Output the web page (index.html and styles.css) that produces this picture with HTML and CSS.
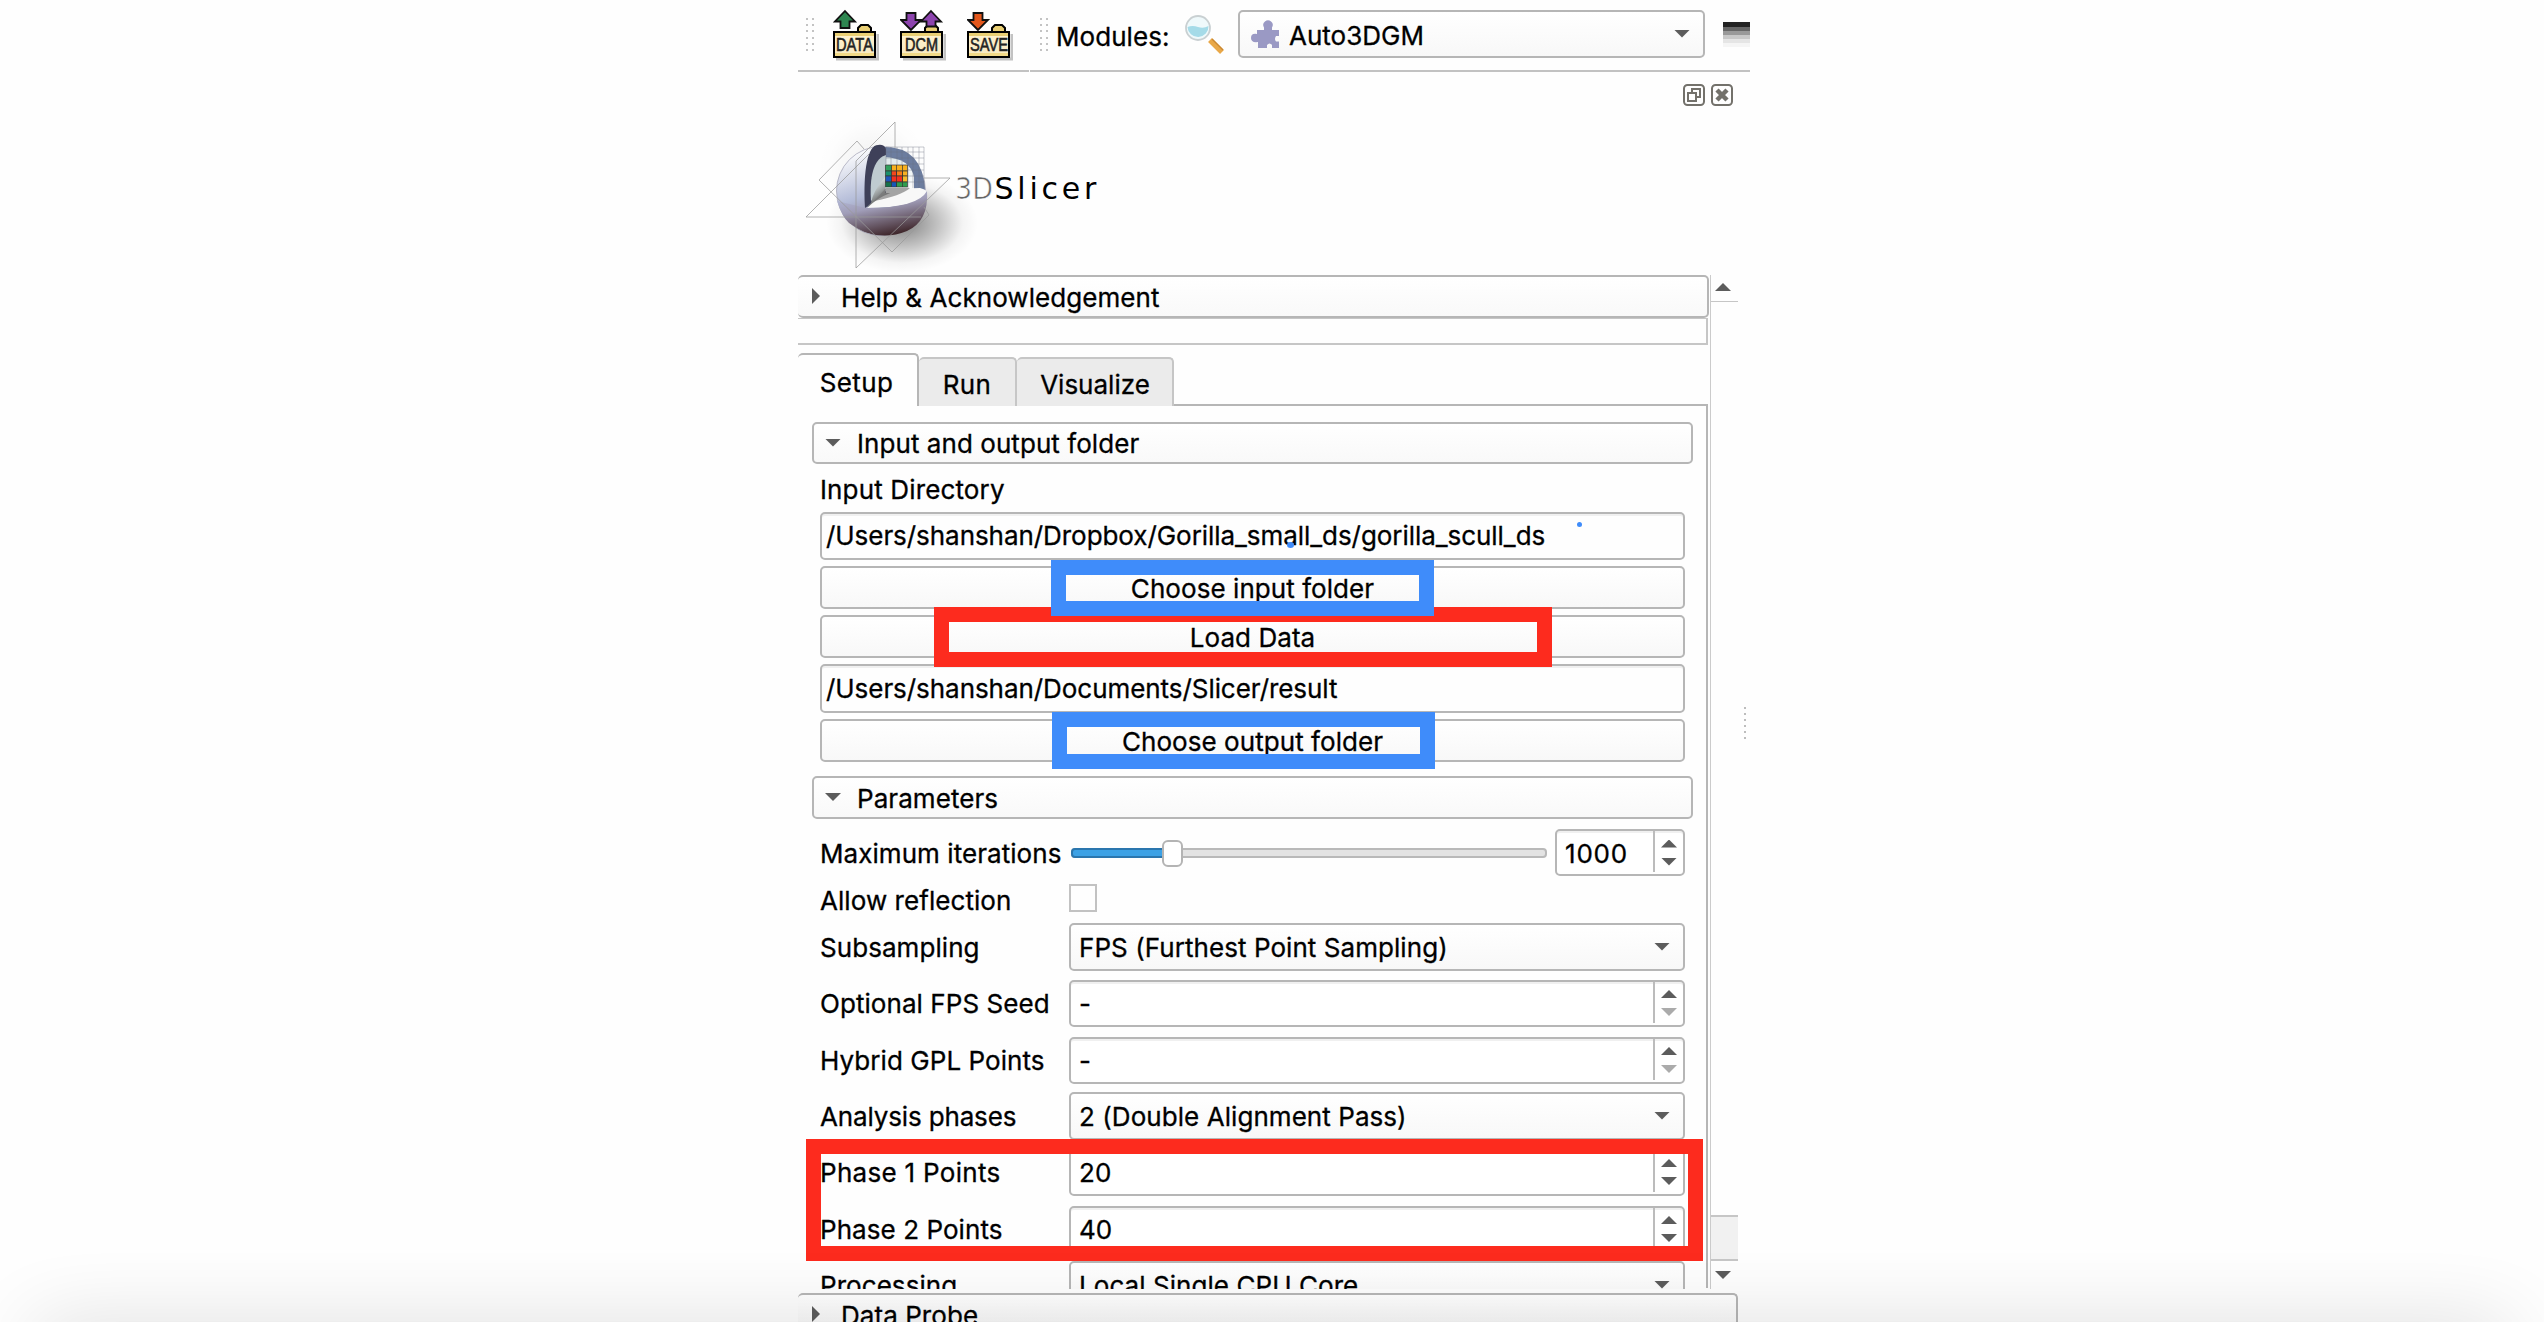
FILE: index.html
```html
<!DOCTYPE html>
<html lang="en">
<head>
<meta charset="utf-8">
<title>3D Slicer - Auto3DGM</title>
<link rel="stylesheet" href="styles.css">
</head>
<body>
<svg class="defs" aria-hidden="true">
  <defs>
    <linearGradient id="paper" x1="0" y1="0" x2="0" y2="1"><stop offset="0" stop-color="#fff3cf"/><stop offset="1" stop-color="#f6e8c0"/></linearGradient>
    <g id="folder">
      <path d="M3 59h42V34" fill="none" stroke="#999" stroke-width="3" opacity=".6"/>
      <path d="M25 32v-4l3-3h7l3 3v4z" fill="#e9cf74" stroke="#000" stroke-width="2"/>
      <rect x="1" y="32" width="41" height="25" fill="url(#paper)" stroke="#000" stroke-width="2"/>
      <rect x="2" y="33" width="39" height="3" fill="#e9cf74"/>
      <rect x="2" y="53" width="39" height="3" fill="#f1d987"/>
    </g>
  </defs>
</svg>
<div class="app">
  <header class="toolbar">
    <div class="bar bar-file">
      <i class="grip"></i>
      <svg class="tool" viewBox="0 0 46 62"><use href="#folder"/><path d="M12 11 22 21.500h-5.500v6.500h-9v-6.500H2z" fill="#2e8650" stroke="#111" stroke-width="1.800"/><text x="3" y="51" textLength="37" lengthAdjust="spacingAndGlyphs">DATA</text></svg>
      <svg class="tool" viewBox="0 0 46 62"><use href="#folder"/><path d="M11 30 1 20h5.500v-7h9v7H21z" fill="#8d44ae" stroke="#111" stroke-width="1.800"/><path d="M31 11 41 21.500h-5.500v5h-9v-5H21z" fill="#8d44ae" stroke="#111" stroke-width="1.800"/><text x="5" y="51" textLength="33" lengthAdjust="spacingAndGlyphs">DCM</text></svg>
      <svg class="tool" viewBox="0 0 46 62"><use href="#folder"/><path d="M11 30 1 20h5.500v-7h9v7H21z" fill="#e2571c" stroke="#111" stroke-width="1.800"/><text x="3" y="51" textLength="38" lengthAdjust="spacingAndGlyphs">SAVE</text></svg>
    </div>
    <div class="bar bar-modules">
      <i class="grip"></i>
      <span class="modules-label">Modules:</span>
      <svg class="search" viewBox="0 0 42 42"><path d="M26 26 38 38" stroke="#e9a848" stroke-width="5.500"/><path d="M28 25 39 36" stroke="#c98733" stroke-width="1.200"/><circle cx="14" cy="14" r="12" fill="#eff9fb" stroke="#c9d0d2" stroke-width="1.800"/><path d="M3.500 13q5-2 10.500 0t10.500-1a10.500 10.500 0 0 1-21 1z" fill="#a5dbe8"/></svg>
      <div class="combo module-combo">
        <svg class="puzzle" viewBox="0 0 30 30"><path d="M6 11h7V8.500A4.700 4.700 0 1 1 21 8.500V11h7v6h-3q-2 3 0 5.500h3V29H21v-3q-2.500-3-5 0v3H7v-6q-7 1-7-4t6-4z" fill="#9a99c4"/></svg>
        <span>Auto3DGM</span><i class="down"></i>
      </div>
      <i class="stripes"></i>
    </div>
  </header>

  <div class="dock-title">
    <svg viewBox="0 0 22 22"><rect x="1" y="1" width="20" height="20" rx="3.500"/><path d="M5 9h8v8H5zM9 9V5h8v8h-4"/></svg>
    <svg viewBox="0 0 22 22"><rect x="1" y="1" width="20" height="20" rx="3.500"/><path d="M6 6l10 10M16 6 6 16" class="cross"/></svg>
  </div>

  <svg class="logo" viewBox="0 0 330 165">
    <defs>
      <radialGradient id="shade"><stop offset="0" stop-color="#000" stop-opacity=".5"/><stop offset=".5" stop-color="#000" stop-opacity=".22"/><stop offset=".8" stop-color="#000" stop-opacity=".04"/><stop offset="1" stop-color="#000" stop-opacity="0"/></radialGradient>
      <linearGradient id="ball" x1=".3" y1="0" x2=".65" y2="1"><stop offset="0" stop-color="#fff"/><stop offset=".5" stop-color="#b4bcd8"/><stop offset=".68" stop-color="#9b99b3"/><stop offset=".88" stop-color="#513c40"/><stop offset="1" stop-color="#221519"/></linearGradient>
      <linearGradient id="bowl" x1=".2" y1="0" x2=".6" y2="1"><stop offset="0" stop-color="#b8c0de"/><stop offset=".4" stop-color="#a09db8"/><stop offset="1" stop-color="#3d2428"/></linearGradient>
      <linearGradient id="core" x1="0" y1="0" x2=".5" y2="1"><stop offset="0" stop-color="#d7e4e6"/><stop offset="1" stop-color="#fff"/></linearGradient>
      <linearGradient id="hollow" x1="0" y1="0" x2="1" y2="1"><stop offset=".2" stop-color="#d9e3e4"/><stop offset=".6" stop-color="#555"/><stop offset="1" stop-color="#fff"/></linearGradient>
    </defs>
    <g transform="translate(10 9)">
      <ellipse cx="102" cy="104" rx="76" ry="50" fill="url(#shade)"/>
      <circle cx="74" cy="50" r="58" fill="url(#shade)" opacity=".12"/>
      <circle cx="81" cy="72" r="44.500" fill="url(#ball)" stroke="#aab" stroke-width=".8"/>
      <path d="M83 28q40-1 42 44l-2 10q-20 10-56 6z" fill="#6c7d9f"/>
      <path d="M84 38q26 1 30 20v18q-18 6-43 9z" fill="url(#core)"/>
      <path d="M65 89C63 50 68 26 78 26q6-1 8 4v44z" fill="#3e4059"/>
      <path d="M71 82C69 52 76 39 86 36v36z" fill="#bfcbd0"/>
      <path d="M71 84q2-12 14-26v16h26q-8 6-44 14z" fill="url(#hollow)"/>
      <path d="M67 89q20-20 53-20 9 2 6 6-10 14-59 14z" fill="#f8f8f8"/>
      <path d="M86 69h24q-9 8-36 13z" fill="#777" opacity=".65"/>
      <path d="M66 89q52 0 61-17 2 30-20 40-30 12-58-8-7-6-12-22z" fill="url(#bowl)"/>
    </g>
    <g transform="translate(8.500 0)" stroke="#333" stroke-width=".7">
      <path d="M87 55h6v6h-6z" fill="#31a05c"/><path d="M93 55h16v6H93z" fill="#f8b01c"/>
      <path d="M87 61h6v5h-6z" fill="#18906c"/><path d="M93 61h5v5h-5z" fill="#f4471c"/><path d="M98 61h6v5h-6z" fill="#fb7d16"/><path d="M104 61h5v5h-5z" fill="#f6b021"/>
      <path d="M87 66h6v6h-6z" fill="#1e56ba"/><path d="M93 66h11v6H93z" fill="#f5301e"/><path d="M104 66h5v6h-5z" fill="#f6bb2b"/>
      <path d="M87 72h6v5h-6z" fill="#14724a"/><path d="M93 72h5v5h-5z" fill="#1556b8"/><path d="M98 72h11v5H98z" fill="#2f9d4e"/>
      <path d="M98 55v22M104 55v22"/>
    </g>
    <path d="M96 37h38v41M96 37v18M101 37v18M107 37v18M112 37v18M118 37v41M123 37v41M129 37v41M96 42h38M96 48h38M118 54h16M118 60h16M118 66h16M118 72h16" fill="none" stroke="#68727e" stroke-width=".7" opacity=".55"/>
    <path d="M105 38V12L66 51v107l94-90h-26M66 107H16l64-64M74 39 67 31 29 70l73 72 37-37-5-8M66 107h65" fill="none" stroke="#999" stroke-width="1" opacity=".75"/>
    <text class="logo-3d" x="165" y="89" textLength="38" lengthAdjust="spacingAndGlyphs">3D</text>
    <text class="logo-name" x="204.500" y="89" textLength="102">Slicer</text>
  </svg>

  <div class="viewport">
    <main class="content">
      <div class="head help"><i class="right"></i>Help &amp; Acknowledgement</div>
      <div class="help-frame"></div>
      <nav class="tabs"><span class="tab active">Setup</span><span class="tab run">Run</span><span class="tab vis">Visualize</span></nav>
      <section class="pane">
        <div class="head group"><i class="down"></i>Input and output folder</div>
        <div class="io">
          <div class="caption">Input Directory</div>
          <div class="field path">/Users/shanshan/Dropbox/Gorilla_small_ds/gorilla_scull_ds</div>
          <div class="button">Choose input folder</div>
          <div class="button">Load Data</div>
          <div class="field path">/Users/shanshan/Documents/Slicer/result</div>
          <div class="button">Choose output folder</div>
        </div>
        <div class="head group params"><i class="down"></i>Parameters</div>
        <div class="form">
          <label>Maximum iterations</label>
          <div class="slider-row"><div class="slider"><div class="fill"></div><div class="handle"></div></div>
            <div class="spin small"><span class="wide">1000</span><div class="steps"><i class="up"></i><i class="down"></i></div></div></div>
          <label class="allow">Allow reflection</label><div class="check"></div>
          <label>Subsampling</label><div class="combo"><span>FPS (Furthest Point Sampling)</span><i class="down"></i></div>
          <label>Optional FPS Seed</label><div class="spin"><span>-</span><div class="steps"><i class="up"></i><i class="down off"></i></div></div>
          <label>Hybrid GPL Points</label><div class="spin"><span>-</span><div class="steps"><i class="up"></i><i class="down off"></i></div></div>
          <label class="tight">Analysis phases</label><div class="combo"><span>2 (Double Alignment Pass)</span><i class="down"></i></div>
          <label class="loose">Phase 1 Points</label><div class="spin"><span>20</span><div class="steps"><i class="up"></i><i class="down"></i></div></div>
          <label>Phase 2 Points</label><div class="spin"><span>40</span><div class="steps"><i class="up"></i><i class="down"></i></div></div>
          <label>Processing</label><div class="combo"><span>Local Single CPU Core</span><i class="down"></i></div>
        </div>
      </section>
    </main>
    <aside class="scrollbar"><div class="line-up"><i class="up"></i></div><div class="track"></div><div class="thumb"></div><div class="line-down"><i class="down"></i></div></aside>
    <i class="splitter"></i>
  </div>
  <div class="head probe"><i class="right"></i><span>Data Probe</span></div>
</div>

<div class="mark red load-mark"></div>
<div class="mark blue input-mark"></div>
<div class="mark blue output-mark"></div>
<div class="mark red phase-mark"></div>
<i class="dot dot-a"></i><i class="dot dot-b"></i>
<div class="bottom-edge"><div class="bottom-shadow"></div></div>
</body>
</html>
```
FILE: styles.css
```css
* { box-sizing: border-box; }
html, body { height: 100%; }
body {
  margin: 0;
  position: relative;
  overflow: hidden;
  background: #fefefe;
  color: #000;
  font: 400 26px/1.2 Inter, "Liberation Sans", sans-serif;
  letter-spacing: .06px;
  -webkit-text-stroke: .3px #000;
  white-space: nowrap;
}
.defs { position: absolute; width: 0; height: 0; }
.app { width: 952px; height: 1322px; margin-left: 798px; overflow: hidden; display: flex; flex-direction: column; }

/* arrows */
.up, .down, .right { flex: none; display: block; background: #5c5c5c; }
.up { width: 16px; height: 8px; clip-path: polygon(50% 0, 100% 100%, 0 100%); }
.down { width: 16px; height: 8px; clip-path: polygon(0 0, 100% 0, 50% 100%); }
.right { width: 8px; height: 16px; clip-path: polygon(0 0, 100% 50%, 0 100%); }
.off { background: #ababab; }

/* toolbar */
.toolbar { flex: none; height: 72px; display: flex; gap: 1px; }
.bar { display: flex; align-items: flex-start; border-bottom: 2px solid #c2c2c2; }
.bar-file { width: 231px; padding-left: 8px; }
.bar-modules { flex: 1; padding-left: 10px; }
.grip {
  flex: none; width: 8px; height: 33px; margin-top: 18px;
  background-image: linear-gradient(90deg, transparent 2px, #fefefe 2px 6px, transparent 6px), repeating-linear-gradient(#c3c3c3 0 2px, #fefefe 2px 6.2px);
}
.tool { flex: none; width: 46px; height: 62px; margin-right: 21px; }
.grip + .tool { margin-left: 19px; }
.tool text { font: 400 19px "Liberation Sans", sans-serif; stroke: #222; stroke-width: .6px; fill: #222; letter-spacing: 0; }
.modules-label { width: 126px; flex: none; padding-left: 8px; line-height: 72px; margin-top: 1px; }
.search { flex: none; width: 42px; height: 42px; margin: 14px 0 0 10px; }
.combo {
  height: 48px; border: 2px solid #b6b6b6; border-radius: 5px;
  background: linear-gradient(#fff, #f8f8f8);
  display: flex; align-items: center; justify-content: space-between;
  padding: 0 13px 0 8px;
}
.combo .down { margin-top: -1px; }
.module-combo { width: 467px; flex: none; margin: 10px 0 0 12px; padding: 0 13px 0 11px; justify-content: flex-start; letter-spacing: 0; }
.module-combo span { flex: 1; padding: 3px 0 0 8px; }
.puzzle { width: 30px; height: 30px; }
.stripes { flex: 1; height: 25px; margin: 22px 0 0 18px; background: linear-gradient(#222 0 5px, #666 5px 9px, #999 9px 13px, #c8c8c8 13px 17px, #e5e5e5 17px 21px, #f5f5f5 21px); }

.dock-title { flex: none; height: 39px; padding: 12px 17px 0 0; display: flex; justify-content: flex-end; gap: 6px; }
.dock-title svg { width: 22px; height: 22px; fill: none; stroke: #73716b; stroke-width: 2; }
.dock-title .cross { stroke-width: 4.5; }
.logo { flex: none; width: 330px; height: 165px; margin: -1px 0 0 -8px; overflow: hidden; }
.logo text { font-family: "DejaVu Sans", sans-serif; font-size: 30px; }
.logo-3d { fill: #666; stroke: #fefefe; stroke-width: .7px; }
.logo-name { fill: #000; stroke: none; }

/* scrolling module panel */
.viewport { flex: none; height: 1014px; overflow: hidden; display: flex; }
.content { width: 912px; flex: none; }
.head { display: flex; align-items: center; border: 2px solid #b6b6b6; border-radius: 5px; padding-top: 2px; background: linear-gradient(#fff, #f9f9f9); }
.head .down, .head .right { margin-top: -3px; }
.help { width: 911px; height: 43px; border-left: 0; padding-left: 14px; gap: 21px; }
.help-frame { width: 910px; height: 27px; border: solid #c6c6c6; border-width: 1px 2px 2px 0; }
.tabs { height: 61px; padding-top: 8px; display: flex; align-items: flex-start; background: linear-gradient(#b6b6b6, #b6b6b6) 0 100% / 910px 2px no-repeat; }
.tab { height: 49px; margin-top: 4px; padding-top: 10px; line-height: 32px; text-align: center; background: #ebebeb; border: 2px solid #c6c6c6; border-left: 0; border-bottom: 0; border-radius: 5px 5px 0 0; letter-spacing: .35px; }
.tab.active { width: 121px; height: 53px; margin-top: 0; padding: 12px 2px 0 0; background: #fefefe; border-color: #b6b6b6; }
.run { width: 98px; }
.vis { width: 157px; letter-spacing: 0; padding-left: 1px; }
.pane { width: 910px; height: 882px; padding: 16px 13px 0 14px; border-right: 2px solid #b6b6b6; }
.group { height: 42px; padding-left: 11px; gap: 16px; }
.params { height: 43px; margin-top: 14px; }
.io { padding: 0 8px; display: flex; flex-direction: column; }
.caption { height: 48px; line-height: 51px; letter-spacing: .14px; }
.field, .button { border: 2px solid #b6b6b6; border-radius: 5px; height: 48px; line-height: 44px; }
.path { padding-left: 4px; letter-spacing: -.055px; box-shadow: inset 0 2px #f0f0f0; }
.button { height: 43px; margin-top: 6px; line-height: 41px; text-align: center; background: linear-gradient(#fff, #f8f8f8); }
.button + .field { margin-top: 6px; height: 49px; line-height: 45px; }

.form { padding: 10px 7px 0 8px; display: grid; grid-template-columns: 249px 616px; grid-template-rows: 47px 44px 54px 58px 56px 56px 56px 58px 54px; align-items: center; }
.form label, .form span { padding-top: 2px; }
.tight { letter-spacing: -.15px; }
.loose { letter-spacing: .3px; }
.form .allow { padding-top: 6px; }
.check { width: 28px; height: 28px; border: 2px solid #c2c2c2; }
.slider-row { display: flex; align-items: center; justify-content: space-between; padding-left: 2px; }
.slider { position: relative; width: 476px; height: 10px; border: 2px solid #b9b9b9; border-radius: 4px; background: #e3e3e3; }
.fill { width: 96px; height: 10px; margin: -2px; border: 2px solid #2a76ae; border-radius: 4px; background: #3ca1e5; }
.handle { position: absolute; left: 89px; top: -10px; width: 21px; height: 27px; border: 2px solid #b4b4b4; border-radius: 6px; background: #fff; }
.spin { height: 47px; border: 2px solid #b6b6b6; border-radius: 5px; background: #fff; display: flex; justify-content: space-between; align-items: center; padding-left: 8px; box-shadow: inset 0 2px #f0f0f0; }
.small { width: 130px; }
.wide { letter-spacing: .8px; }
.steps { width: 30px; height: 41px; margin-top: -2px; border-left: 2px solid #bcbcbc; display: flex; flex-direction: column; justify-content: center; align-items: center; gap: 10px; padding-top: 2px; }

.scrollbar { width: 28px; flex: none; border-left: 1px solid #cbcbcb; display: flex; flex-direction: column; }
.line-up { height: 27px; border-bottom: 1px solid #c6c6c6; padding: 8px 0 0 4px; }
.track { height: 913px; }
.thumb { height: 46px; background: #f1f1f1; border: solid #c6c6c6; border-width: 2px 0; }
.line-down { padding: 10px 0 0 4px; }
.splitter { width: 2px; height: 34px; margin: 432px 0 0 6px; background: repeating-linear-gradient(#bdbdbd 0 2px, #fefefe 2px 6px); }
.probe { flex: none; align-items: flex-start; width: 940px; height: 29px; margin-top: 4px; border-left: 0; border-bottom: 0; border-radius: 5px 5px 0 0; padding: 0 0 0 14px; gap: 21px; }
.probe .right { margin-top: 11px; }
.probe span { margin-top: 5px; }

/* annotations drawn over the window */
.mark { position: absolute; border: 15.400px solid; }
.red { border-color: #fd2b1e; }
.blue { border-color: #3f8cfa; }
.load-mark { left: 934px; top: 607px; width: 618px; height: 60px; }
.input-mark { left: 1051px; top: 560px; width: 383px; height: 56px; }
.output-mark { left: 1052px; top: 712px; width: 383px; height: 57px; }
.phase-mark { left: 806px; top: 1139px; width: 897px; height: 122px; }
.dot { position: absolute; border-radius: 50%; background: #3f8cfa; }
.dot-a { left: 1287px; top: 542px; width: 7px; height: 6px; }
.dot-b { left: 1577px; top: 522px; width: 5px; height: 5px; }
.bottom-edge { position: absolute; left: 0; right: 0; bottom: 0; height: 122px; overflow: hidden; }
.bottom-shadow { height: 40px; margin: 130px 36px 0; box-shadow: 0 0 80px rgba(0, 0, 0, .19), 0 20px 80px rgba(0, 0, 0, .02); }
```
